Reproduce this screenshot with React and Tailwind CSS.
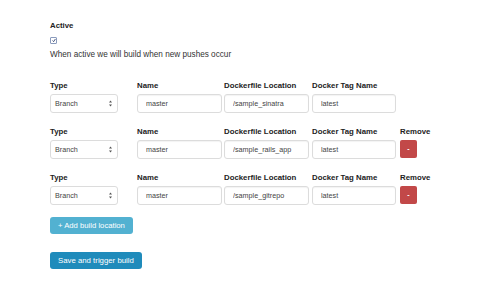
import React, { useState } from 'react';

const initialRows = [
    { type: 'Branch', name: 'master', dockerfile: '/sample_sinatra', tag: 'latest', removable: false },
    { type: 'Branch', name: 'master', dockerfile: '/sample_rails_app', tag: 'latest', removable: true },
    { type: 'Branch', name: 'master', dockerfile: '/sample_gitrepo', tag: 'latest', removable: true },
];

const labelClass = 'block h-[17px] pt-[3px] text-[7.8px] font-bold leading-[12px] text-[#222] whitespace-nowrap';
const inputClass = 'block h-[19px] w-full rounded-[3px] border border-[#dcdcdc] bg-white px-[8px] text-[7.2px] text-[#444] outline-none shadow-[inset_0_1px_1px_rgba(0,0,0,0.05)]';

const BuildRow = ({ row, onRemove }) => (
    <div className="flex items-start">
        <div className="w-[68px] mr-[19px]">
            <label className={labelClass}>Type</label>
            <div className="relative h-[19px] w-full rounded-[3px] border border-[#dcdcdc] bg-white">
                <span className="absolute left-[4px] top-[4px] text-[7.2px] leading-[9px] text-[#444]">{row.type}</span>
                <svg className="absolute right-[5px] top-[5px]" width="3" height="7" viewBox="0 0 3 7">
                    <path d="M0 2.6 L1.5 0.5 L3 2.6 Z" fill="#555" />
                    <path d="M0 4.4 L1.5 6.5 L3 4.4 Z" fill="#555" />
                </svg>
            </div>
        </div>
        <div className="w-[85px] mr-[2px]">
            <label className={labelClass}>Name</label>
            <input className={inputClass} defaultValue={row.name} />
        </div>
        <div className="w-[85px] mr-[3px]">
            <label className={labelClass}>Dockerfile Location</label>
            <input className={inputClass} defaultValue={row.dockerfile} />
        </div>
        <div className="w-[84px] mr-[4px]">
            <label className={labelClass}>Docker Tag Name</label>
            <input className={inputClass} defaultValue={row.tag} />
        </div>
        {row.removable && (
            <div className="w-[40px]">
                <label className={labelClass}>Remove</label>
                <button
                    onClick={onRemove}
                    className="flex h-[18px] w-[17px] items-center justify-center rounded-[2px] bg-[#c24848] text-[7px] font-bold text-white"
                >
                    -
                </button>
            </div>
        )}
    </div>
);

export default function App() {
    const [active, setActive] = useState(true);
    const [rows, setRows] = useState(initialRows);

    return (
        <div className="min-h-[282px] w-[499px] bg-white pl-[50px] pt-[20px] font-['Liberation_Sans',Arial,sans-serif]">
            {/* Active toggle */}
            <div>
                <label className="block text-[7.8px] font-bold leading-[12px] text-[#222]">Active</label>
                <button
                    onClick={() => setActive(!active)}
                    className="mt-[5px] flex h-[7px] w-[7px] items-center justify-center rounded-[1px] border border-[#8a9bbd] bg-white"
                >
                    {active && (
                        <svg width="7" height="7" viewBox="0 0 7 7" className="-mt-[1px] ml-[1px]">
                            <path d="M1 3.5 L2.8 5.5 L6 0.8" fill="none" stroke="#1c2d5c" strokeWidth="1.4" />
                        </svg>
                    )}
                </button>
                <p className="mt-[5px] text-[8.2px] leading-[11px] text-[#333]">When active we will build when new pushes occur</p>
            </div>

            {/* Build locations */}
            <div className="mt-[17px] flex flex-col gap-[10px]">
                {rows.map((row, i) => (
                    <BuildRow key={i} row={row} onRemove={() => setRows(rows.filter((_, j) => j !== i))} />
                ))}
            </div>

            <button className="mt-[12px] block h-[17px] rounded-[3px] bg-[#52b1d1] px-[8px] text-[7.7px] leading-[17px] text-white">
                + Add build location
            </button>

            <button className="mt-[18px] block h-[17px] rounded-[3px] bg-[#1f8bbb] px-[8px] text-[7.8px] leading-[17px] text-white">
                Save and trigger build
            </button>
        </div>
    );
}
